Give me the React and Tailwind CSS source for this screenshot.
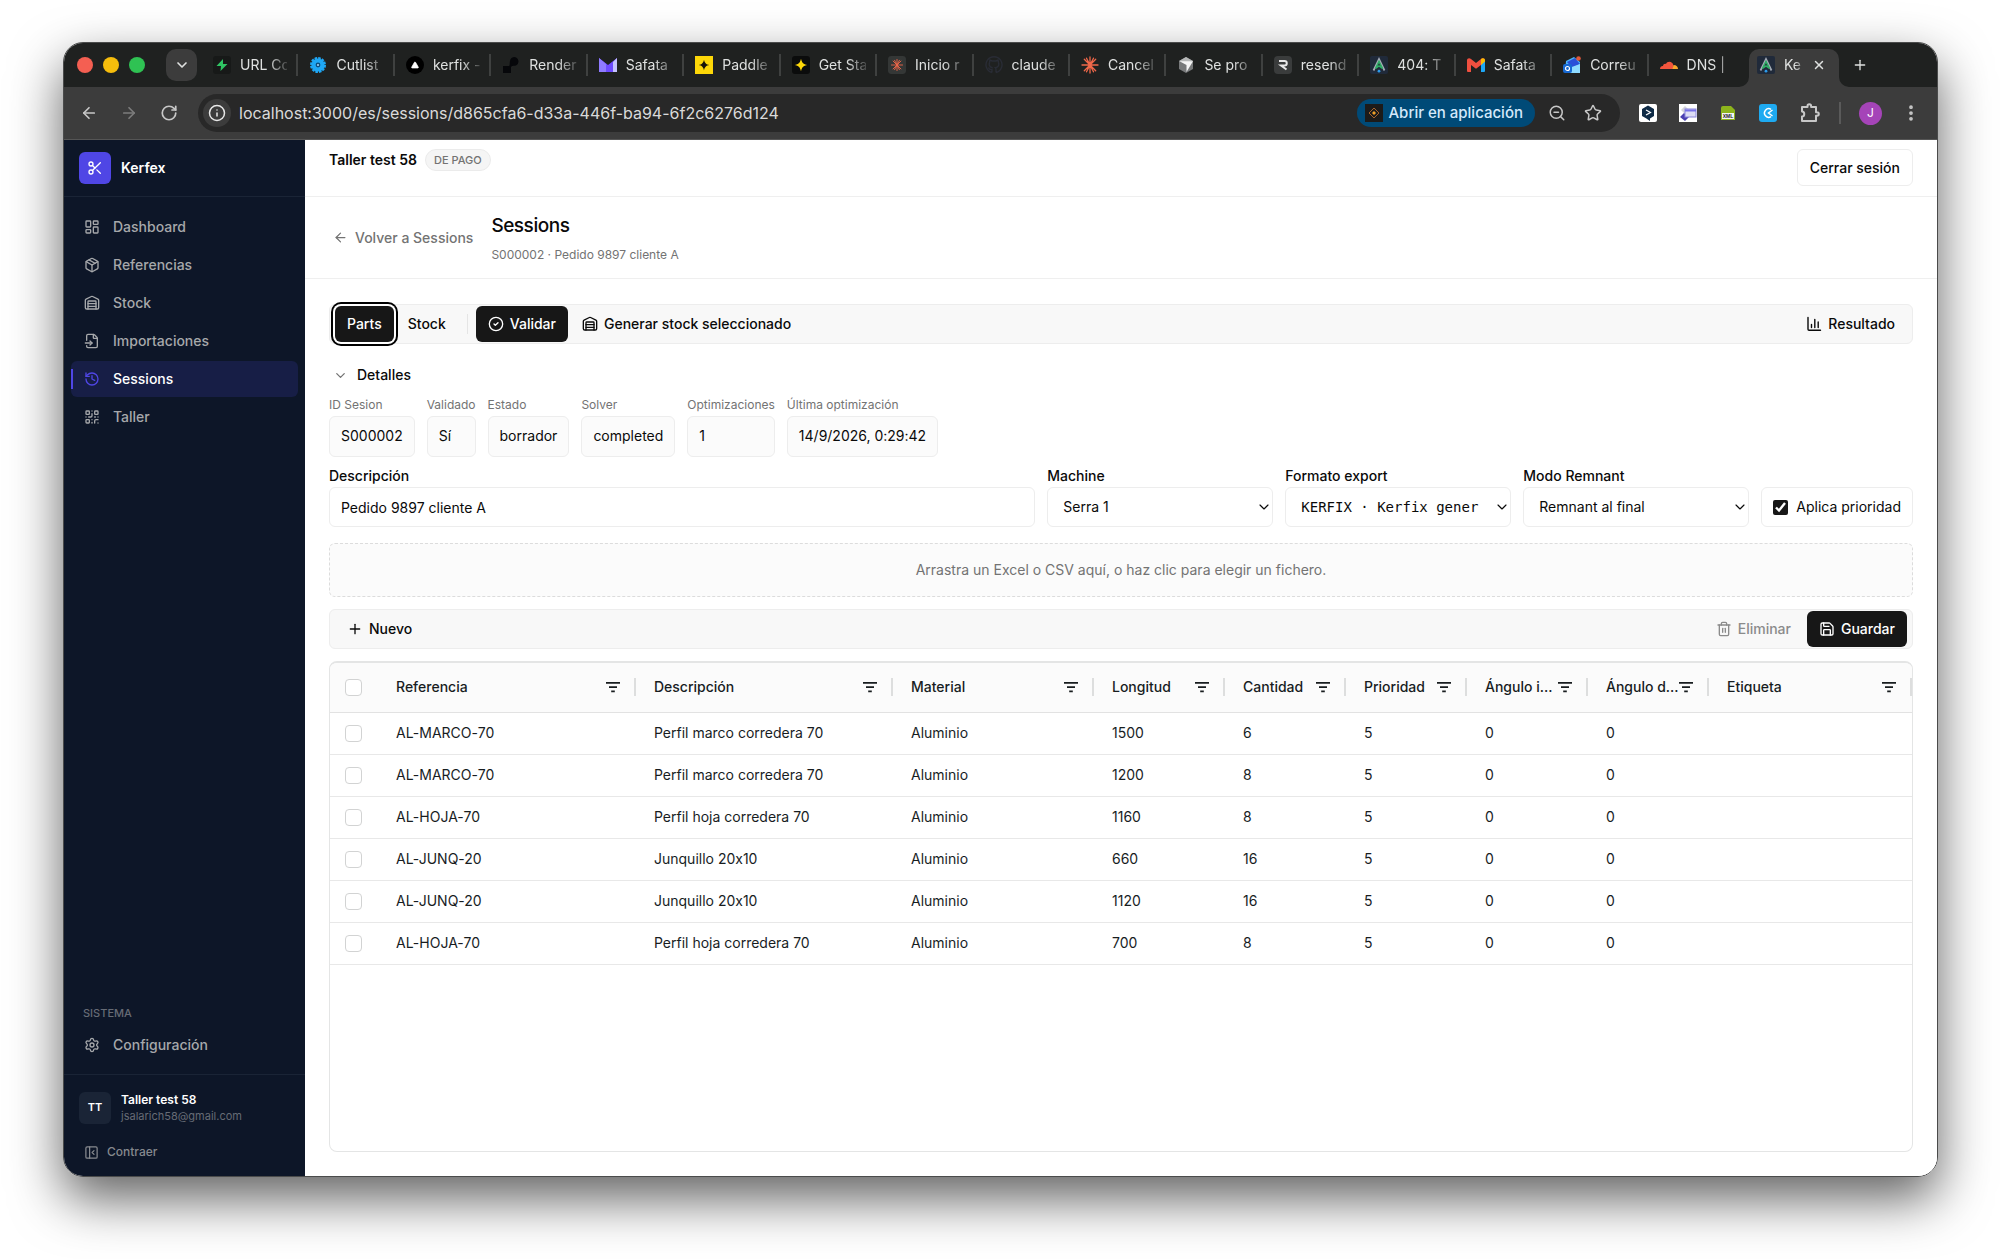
import { useState } from "react";
import {
  ArrowLeft,
  ArrowRight,
  ChevronDown,
  CircleCheck,
  EllipsisVertical,
  FileInput,
  History,
  Info,
  LayoutDashboard,
  Package,
  PanelLeftClose,
  Plus,
  QrCode,
  RotateCw,
  Save,
  Scissors,
  Settings,
  Star,
  Trash2,
  Triangle,
  Warehouse,
  X,
  ZoomOut,
} from "lucide-react";

const BoltIcon = () => (
  <svg viewBox="0 0 18 18" className="size-[18px]">
    <rect width="18" height="18" rx="3" fill="#171918" />
    <path d="M10 3 3.500 10H8l-.5 5L14.500 8H10z" fill="#2fc463" />
  </svg>
);

const GearIcon = () => (
  <svg viewBox="0 0 18 18" className="size-[18px]">
    <circle cx="9" cy="9" r="6.600" fill="#1ea7f5" />
    <circle cx="9" cy="9" r="7" fill="none" stroke="#1ea7f5" strokeWidth="2" strokeDasharray="2.600 1.065" />
    <circle cx="9" cy="9" r="2.400" fill="#0d4e7d" />
    <circle cx="9" cy="9" r="1" fill="#a8dcff" />
  </svg>
);

const VercelIcon = () => (
  <span className="flex size-[18px] items-center justify-center rounded-full bg-black">
    <Triangle className="size-2 fill-white text-white" />
  </span>
);

const RenderIcon = () => (
  <svg viewBox="0 0 18 18" className="size-[18px]">
    <path d="M12 1a4.500 4.500 0 0 1 2 8.500c-3 .5-4.500 0-5 2V17H1v-7h6c1 0 .5-3 1-5a4.500 4.500 0 0 1 4-4z" fill="#06070a" />
  </svg>
);

const MailMIcon = () => (
  <svg viewBox="0 0 18 18" className="size-[18px]">
    <path d="M0 2l9 7 9-7v14H0z" fill="#6d4aff" />
    <path d="M0 2l7 6v8H0z" fill="#8f7bff" />
    <path d="M14 6l4-4v14h-4z" fill="#c5c2ff" />
  </svg>
);

const PaddleIcon = () => (
  <svg viewBox="0 0 18 18" className="size-[18px]">
    <rect width="18" height="18" fill="#fdd708" />
    <path d="M9 3.500c.6 3.500 2 4.900 5.500 5.500-3.500.6-4.900 2-5.500 5.500C8.400 11 7 9.600 3.500 9 7 8.400 8.400 7 9 3.500z" fill="#15130a" />
  </svg>
);

const PaddleDarkIcon = () => (
  <svg viewBox="0 0 18 18" className="size-[18px]">
    <rect width="18" height="18" rx="3" fill="#0b0c0c" />
    <path d="M9 2.500c.7 4 2.300 5.800 6.500 6.500-4.200.7-5.800 2.500-6.500 6.500C8.300 11.500 6.700 9.700 2.500 9 6.700 8.300 8.300 6.500 9 2.500z" fill="#fdd708" />
  </svg>
);

const Burst = () => (
  <path
    d="M9 1v16M1 9h16M3.300 3.300l11.400 11.400M14.700 3.300 3.300 14.700M5.500 2.200l7 13.600M12.500 2.200l-7 13.600"
    stroke="#f0684a"
    strokeWidth="1.300"
    strokeLinecap="round"
  />
);

const BurstIcon = () => (
  <svg viewBox="0 0 18 18" className="size-[18px]">
    <Burst />
  </svg>
);

const BurstTileIcon = () => (
  <svg viewBox="-4 -4 26 26" className="size-[18px]">
    <rect x="-4" y="-4" width="26" height="26" rx="5" fill="#343736" />
    <Burst />
  </svg>
);

const GithubIcon = () => (
  <svg viewBox="0 0 18 18" className="size-[18px]">
    <path
      d="M7 16.500v-3c-2 .4-3-.5-3.500-2M11 16.500v-3c0-1-.3-1.400-.7-1.800 3.200-.4 4-2.700 3.200-5.200L13 4l-2 1H7L5 4l-.5 2.500c-.8 2.500 0 4.800 3.200 5.200M7 16.500A8 8 0 1 1 11 16.500"
      fill="none"
      stroke="#292c35"
      strokeWidth="1.400"
    />
  </svg>
);

const CursorIcon = () => (
  <svg viewBox="0 0 18 18" className="size-[18px]">
    <path d="M9 1l7 4v8l-7 4-7-4V5z" fill="#77797a" />
    <path d="M2 5l7-4 7 4-7 2z" fill="#b5b7b7" />
    <path d="M2.500 5.300H16L9.500 16V9z" fill="#f5f5f5" />
  </svg>
);

const ResendIcon = () => (
  <svg viewBox="0 0 18 18" className="size-[18px]">
    <rect width="18" height="18" rx="4" fill="#3a3c3c" />
    <path d="M5 5h5.500a2 2 0 0 1 0 4.500H7l5.500 4" fill="none" stroke="#e8e8e8" strokeWidth="2" />
  </svg>
);

const ArrowAIcon = () => (
  <svg viewBox="0 0 18 18" className="size-[18px]">
    <rect width="18" height="18" rx="2" fill="#202a3a" />
    <path d="M3.500 14.500 9 3l5.500 11.500" fill="none" stroke="#a3aab5" strokeWidth="1.800" />
    <path d="M5.500 12.500 9 5.500l3.500 7L9 10z" fill="none" stroke="#2fae66" strokeWidth="1.500" />
    <circle cx="9" cy="15.200" r="1.400" fill="#2c9ae8" />
  </svg>
);

const GmailIcon = () => (
  <svg viewBox="0 0 18 18" className="size-[18px]">
    <path d="M14 6l4-2.500V15a1 1 0 0 1-1 1h-3z" fill="#1ea7f5" />
    <path d="M0 4.500C0 2 2.500 1.800 4 3l5 4 5-4c1.500-1.200 4-1 4 1.500L14 9l-5 3.700L4 9v7H1a1 1 0 0 1-1-1z" fill="#ef4f3f" />
    <path d="M14 3v6l4-3.500v-1C18 2 15.500 1.800 14 3z" fill="#fbbc04" />
  </svg>
);

const OutlookIcon = () => (
  <svg viewBox="0 0 18 18" className="size-[18px]">
    <path d="M3 5l8-4 6 5v11H2z" fill="#4bb5f8" />
    <path d="M4 6l8-4 5 6-8 4z" fill="#2a4fd8" />
    <path d="M6 12l11-4v9H6z" fill="#8edbff" />
    <rect y="8" width="9" height="9" rx="2" fill="#1769d2" />
    <circle cx="4.500" cy="12.500" r="2" fill="none" stroke="#fff" strokeWidth="1.200" />
    <circle cx="15.500" cy="2.500" r="2.300" fill="#e0593c" />
  </svg>
);

const CloudflareIcon = () => (
  <svg viewBox="0 0 18 18" className="size-[18px]">
    <path d="M0 13c0-2 1.500-3.200 3-3 .2-2 2-2.500 3-2 1-3 6.500-3.500 7.500 1.500L13 13z" fill="#f2553d" />
    <path d="M12.500 13l1-4c3 0 4.500 1.700 4.500 4z" fill="#fba92c" />
  </svg>
);

const FilterIcon = () => (
  <svg viewBox="0 0 14 12" className="h-3 w-3.5">
    <path d="M0 1h14v1.800H0zM3 5.200h8V7H3zM5.200 9.400h3.600v1.800H5.200z" fill="#181d1f" />
  </svg>
);

const PuzzleIcon = () => (
  <svg viewBox="0 0 22 22" className="size-[22px]">
    <path
      d="M3 5h5.500V4a1.800 1.800 0 0 1 3.600 0v1H17v5.200h1a1.800 1.800 0 0 1 0 3.600h-1V19H3v-4.500c3 0 3-5 0-5z"
      fill="none"
      stroke="#c7c7c7"
      strokeWidth="2"
      strokeLinejoin="round"
    />
  </svg>
);

const tabs = [
  { title: "URL Co", icon: <BoltIcon /> },
  { title: "Cutlist", icon: <GearIcon /> },
  { title: "kerfix -", icon: <VercelIcon /> },
  { title: "Render", icon: <RenderIcon /> },
  { title: "Safata", icon: <MailMIcon /> },
  { title: "Paddle", icon: <PaddleIcon /> },
  { title: "Get Sta", icon: <PaddleDarkIcon /> },
  { title: "Inicio r", icon: <BurstTileIcon /> },
  { title: "claude", icon: <GithubIcon /> },
  { title: "Cancel", icon: <BurstIcon /> },
  { title: "Se pro", icon: <CursorIcon /> },
  { title: "resend", icon: <ResendIcon /> },
  { title: "404: T", icon: <ArrowAIcon /> },
  { title: "Safata", icon: <GmailIcon /> },
  { title: "Correu", icon: <OutlookIcon /> },
  { title: "DNS |", icon: <CloudflareIcon /> },
];

const navItems = [
  { label: "Dashboard", icon: LayoutDashboard },
  { label: "Referencias", icon: Package },
  { label: "Stock", icon: Warehouse },
  { label: "Importaciones", icon: FileInput },
  { label: "Sessions", icon: History },
  { label: "Taller", icon: QrCode },
];

const details = [
  ["ID Sesion", "S000002"],
  ["Validado", "Sí"],
  ["Estado", "borrador"],
  ["Solver", "completed"],
  ["Optimizaciones", "1"],
  ["Última optimización", "14/9/2026, 0:29:42"],
];

const columns = [
  { label: "Referencia", width: "w-[258px]" },
  { label: "Descripción", width: "w-[257px]" },
  { label: "Material", width: "w-[201px]" },
  { label: "Longitud", width: "w-[131px]" },
  { label: "Cantidad", width: "w-[121px]" },
  { label: "Prioridad", width: "w-[121px]" },
  { label: "Ángulo i...", width: "w-[121px]" },
  { label: "Ángulo d...", width: "w-[121px]" },
  { label: "Etiqueta", width: "" },
];

const rows = [
  ["AL-MARCO-70", "Perfil marco corredera 70", "Aluminio", 1500, 6, 5, 0, 0, ""],
  ["AL-MARCO-70", "Perfil marco corredera 70", "Aluminio", 1200, 8, 5, 0, 0, ""],
  ["AL-HOJA-70", "Perfil hoja corredera 70", "Aluminio", 1160, 8, 5, 0, 0, ""],
  ["AL-JUNQ-20", "Junquillo 20x10", "Aluminio", 660, 16, 5, 0, 0, ""],
  ["AL-JUNQ-20", "Junquillo 20x10", "Aluminio", 1120, 16, 5, 0, 0, ""],
  ["AL-HOJA-70", "Perfil hoja corredera 70", "Aluminio", 700, 8, 5, 0, 0, ""],
];

function TabStrip() {
  return (
    <div className="flex h-11 items-end bg-[#1f2120] pl-[13px] text-sm text-[#dfe1e0]">
      <div className="flex h-full items-center gap-[10px]">
        <span className="size-4 rounded-full bg-[#f45f52]" />
        <span className="size-4 rounded-full bg-[#f6bd0c]" />
        <span className="size-4 rounded-full bg-[#2fc253]" />
      </div>
      <button aria-label="Buscar pestañas" className="mb-[6px] ml-[21px] flex h-8 w-[31px] items-center justify-center rounded-[10px] bg-[#3c3c3c]">
        <ChevronDown className="size-4" strokeWidth={2.5} />
      </button>
      <div className="-mr-[6px] ml-[5px] flex h-full min-w-0 flex-1 items-center">
        {tabs.map((tab, i) => (
          <button key={i} className="flex h-full min-w-0 flex-1 items-center pl-[11px]">
            <span className="shrink-0">{tab.icon}</span>
            <span className="ml-[9px] min-w-0 flex-1 whitespace-nowrap text-left [mask-image:linear-gradient(to_right,black_60%,transparent_110%)]">
              {tab.title}
            </span>
            <span className={`ml-[9px] h-[22px] w-[2px] shrink-0 ${i < tabs.length - 1 ? "bg-[#3f4140]" : ""}`} />
          </button>
        ))}
      </div>
      <svg viewBox="0 0 10 10" className="size-[10px] shrink-0">
        <path d="M10 0v10H0A10 10 0 0 0 10 0z" fill="#3c3c3c" />
      </svg>
      <div className="flex h-[38px] w-[90px] shrink-0 items-center rounded-t-[10px] bg-[#3c3c3c] pb-[6px] pl-2">
        <ArrowAIcon />
        <span className="ml-[9px] w-[18px] [mask-image:linear-gradient(to_right,black_60%,transparent_120%)]">Ke</span>
        <button aria-label="Cerrar pestaña" className="ml-[10px]">
          <X className="size-[14px]" strokeWidth={2.5} />
        </button>
      </div>
      <svg viewBox="0 0 10 10" className="size-[10px] shrink-0">
        <path d="M0 0v10h10A10 10 0 0 1 0 0z" fill="#3c3c3c" />
      </svg>
      <button aria-label="Nueva pestaña" className="mr-[69px] mb-[14px] ml-[3px]">
        <Plus className="size-4" strokeWidth={2} />
      </button>
    </div>
  );
}

function AddressBar() {
  return (
    <div className="flex h-[53px] items-center border-b border-[#555] bg-[#3c3c3c] pl-4 text-[#c7c7c7]">
      <button aria-label="Atrás">
        <ArrowLeft className="size-[18px]" strokeWidth={2.25} />
      </button>
      <button aria-label="Adelante" className="ml-[22px] text-[#7c7c7c]">
        <ArrowRight className="size-[18px]" strokeWidth={2.25} />
      </button>
      <button aria-label="Recargar" className="ml-[22px]">
        <RotateCw className="size-[18px]" strokeWidth={2.25} />
      </button>
      <div className="ml-5 flex h-[38px] min-w-0 flex-1 items-center rounded-full bg-[#282828] pr-[18px] pl-[5px]">
        <span className="flex size-7 items-center justify-center rounded-full bg-[#3c3c3c] text-[#e8e8e8]">
          <Info className="size-[18px]" />
        </span>
        <label htmlFor="url" className="sr-only">Dirección</label>
        <input
          id="url"
          className="ml-2 min-w-0 flex-1 bg-transparent text-base text-[#dadada] outline-none"
          defaultValue="localhost:3000/es/sessions/d865cfa6-d33a-446f-ba94-6f2c6276d124"
        />
        <button className="flex h-7 items-center gap-[5px] rounded-full bg-[#004a77] pr-3 pl-2 text-[15px] font-medium text-[#d5e9fb]">
          <svg viewBox="0 0 18 18" className="size-[18px]">
            <rect width="18" height="18" fill="#1c1b1a" />
            <path d="M9 4l5 5-5 5-5-5z" fill="none" stroke="#a4622d" />
            <path d="M9 7l2 2-2 2-2-2z" fill="#f0a029" />
          </svg>
          Abrir en aplicación
        </button>
        <button aria-label="Zoom" className="ml-[13px]">
          <ZoomOut className="size-[18px]" />
        </button>
        <button aria-label="Añadir a marcadores" className="ml-[18px]">
          <Star className="size-[18px]" />
        </button>
      </div>
      <div className="ml-[19px] flex items-center gap-[22px]">
        <svg viewBox="0 0 18 18" className="size-[18px]">
          <rect width="18" height="18" rx="2" fill="#fff" />
          <path d="M9 1.500l6 3.500v7L11 14.500V17l-4-2.700L3 12V5z" fill="#0f2b46" />
          <path d="M7 6l4.500 2.500L7 11" fill="none" stroke="#fff" strokeWidth="1.200" />
        </svg>
        <svg viewBox="0 0 18 18" className="size-[18px]">
          <rect width="18" height="18" fill="#fff" />
          <path d="M2 6l4-4 4 4-4 4z" fill="#d4d4dc" />
          <path d="M1 13l4-4 5 4-4 4z" fill="#4a3fb0" />
          <rect x="6" y="5" width="11" height="8" fill="#dcdcf4" stroke="#8a86dc" />
          <path d="M6 6.500h11" stroke="#7872e8" strokeWidth="2" />
        </svg>
        <svg viewBox="0 0 18 18" className="size-[18px]">
          <path d="M2 4a2 2 0 0 1 2-2h8l4 4v10H2z" fill="#8db41c" />
          <rect x="3" y="9" width="12" height="6" fill="#f4f4f4" />
          <text x="9" y="14" textAnchor="middle" fontSize="5" fontWeight="700" fontFamily="Liberation Sans, sans-serif" fill="#222">XML</text>
        </svg>
        <svg viewBox="0 0 18 18" className="size-[18px]">
          <rect width="18" height="18" rx="3" fill="#1eaaf1" />
          <path d="M12 5.300A4.300 4.300 0 1 0 12 12.700M13.500 6 9.500 9l4 3" fill="none" stroke="#fff" strokeWidth="1.500" />
        </svg>
        <button aria-label="Extensiones">
          <PuzzleIcon />
        </button>
      </div>
      <span className="ml-[18px] h-[22px] w-[2px] bg-[#5a5a5a]" />
      <button className="ml-[18px] flex size-[23px] items-center justify-center rounded-full bg-[#a544b8] text-xs text-white">J</button>
      <button aria-label="Menú" className="mr-4 ml-[19px]">
        <EllipsisVertical className="size-5" strokeWidth={2.5} />
      </button>
    </div>
  );
}

function Sidebar() {
  return (
    <aside className="flex w-[241px] shrink-0 flex-col bg-[#0d1628] text-sm font-medium text-[#a6a8ab]">
      <div className="flex h-[57px] items-center gap-[10px] border-b border-[#1a2436] px-[15px]">
        <span className="flex size-8 items-center justify-center rounded-md bg-[#4f46e5]">
          <Scissors className="size-4 text-white" />
        </span>
        <span className="font-semibold text-white">Kerfex</span>
      </div>
      <nav className="flex flex-1 flex-col gap-[2px] px-[7px] pt-3">
        {navItems.map(({ label, icon: Icon }) =>
          label === "Sessions" ? (
            <a key={label} href="#sessions" className="relative flex h-9 items-center gap-[13px] rounded-md bg-[#171e46] px-[13px] text-white">
              <span className="absolute left-0 h-5 w-[2px] bg-[#4f46e5]" />
              <Icon className="size-4 text-[#4f46e5]" />
              {label}
            </a>
          ) : (
            <a key={label} href="#nav" className="flex h-9 items-center gap-[13px] rounded-md px-[13px]">
              <Icon className="size-4" />
              {label}
            </a>
          )
        )}
      </nav>
      <div className="border-b border-[#1a2436] px-[7px] pb-[11px]">
        <p className="px-3 pb-[5px] text-[11px] text-[#666b75]">SISTEMA</p>
        <a href="#config" className="flex h-9 items-center gap-[13px] px-[13px]">
          <Settings className="size-4" />
          Configuración
        </a>
      </div>
      <div className="flex items-center gap-[10px] px-[15px] pt-4 pb-[14px]">
        <span className="flex size-8 items-center justify-center rounded-md bg-[#1a2436] text-[11px] font-semibold text-white">TT</span>
        <div>
          <p className="text-xs leading-[17px] font-semibold text-white">Taller test 58</p>
          <p className="text-[11px] leading-[17px] font-normal text-[#666b75]">jsalarich58@gmail.com</p>
        </div>
      </div>
      <button className="mb-[11px] flex h-[26px] items-center gap-2 px-5 text-xs text-[#86898e]">
        <PanelLeftClose className="size-[15px]" />
        Contraer
      </button>
    </aside>
  );
}

function SelectField({ id, label, value, mono }) {
  return (
    <div className="w-[226px]">
      <label htmlFor={id} className="block h-[22px] leading-[22px] font-medium">{label}</label>
      <div className="relative">
        <select
          id={id}
          className={`h-10 w-full appearance-none rounded-md border border-[#ededed] bg-white pr-7 pl-[15px] ${
            mono ? "font-['DejaVu_Sans_Mono',monospace]" : ""
          }`}
        >
          <option>{value}</option>
        </select>
        <ChevronDown className="pointer-events-none absolute top-3 right-[1px] size-4" strokeWidth={1.75} />
      </div>
    </div>
  );
}

function PartsTable() {
  const [selected, setSelected] = useState([]);

  const toggle = (i) => {
    setSelected((prev) => (prev.includes(i) ? prev.filter((n) => n !== i) : [...prev, i]));
  };

  const checkboxClass = "block size-[17px] appearance-none rounded-[4px] border border-[#d2d3d3] bg-white checked:bg-black";

  return (
    <div className="mt-3 flex-1 overflow-hidden rounded-lg border border-t-2 border-[#e4e5e5]">
      <table className="w-full table-fixed text-left text-[#181d1f]">
        <thead>
          <tr className="h-[49px] border-b border-[#e2e2e2] bg-[#fbfbfb]">
            <th className="w-12 pl-[15px]">
              <input
                type="checkbox"
                aria-label="Seleccionar todo"
                className={checkboxClass}
                checked={selected.length === rows.length}
                onChange={(e) => setSelected(e.target.checked ? rows.map((_, i) => i) : [])}
              />
            </th>
            {columns.map((col) => (
              <th key={col.label} className={`pl-[18px] font-medium ${col.width}`}>
                <div className="flex items-center justify-between">
                  <span className="whitespace-nowrap">{col.label}</span>
                  <span className="flex shrink-0 items-center gap-[14px]">
                    <FilterIcon />
                    <span className="h-[18px] w-[2px] bg-[#dddede]" />
                  </span>
                </div>
              </th>
            ))}
          </tr>
        </thead>
        <tbody>
          {rows.map((row, i) => (
            <tr key={i} className="h-[42px] border-b border-[#e8e8e8]">
              <td className="pl-[15px]">
                <input
                  type="checkbox"
                  aria-label={`Seleccionar fila ${i + 1}`}
                  className={checkboxClass}
                  checked={selected.includes(i)}
                  onChange={() => toggle(i)}
                />
              </td>
              {row.map((cell, j) => (
                <td key={j} className="truncate pl-[18px]">{cell}</td>
              ))}
            </tr>
          ))}
        </tbody>
      </table>
    </div>
  );
}

function SessionPage() {
  const [description, setDescription] = useState("Pedido 9897 cliente A");

  return (
    <main className="flex min-w-0 flex-1 flex-col bg-white text-sm text-[#0a0a0a]">
      <header className="flex h-[57px] items-start justify-between border-b border-[#efefef] px-6 pt-[9px]">
        <div className="flex h-[22px] items-center gap-2">
          <span className="font-semibold">Taller test 58</span>
          <span className="rounded-full border border-[#ebebeb] bg-[#f5f5f5] px-2 text-[11px] leading-5 font-medium text-[#737373]">DE PAGO</span>
        </div>
        <button className="h-[37px] rounded-md border border-[#ededed] px-3 font-medium">Cerrar sesión</button>
      </header>

      <div className="flex h-[82px] items-center gap-[18px] border-b border-[#efefef] px-6">
        <a href="#sessions" className="flex items-center gap-[7px] pl-1 font-medium text-[#737373]">
          <ArrowLeft className="size-[15px]" />
          Volver a Sessions
        </a>
        <div>
          <h1 className="text-[19px] leading-[30px] font-medium tracking-tight">Sessions</h1>
          <p className="mt-1 text-xs leading-5 text-[#737373]">S000002 · Pedido 9897 cliente A</p>
        </div>
      </div>

      <div className="flex flex-1 flex-col px-6 pt-[25px] pb-6">
        <div className="flex h-10 items-center rounded-md border border-[#ededed] bg-[#f8f8f8] px-[5px] font-medium">
          <button className="h-9 rounded-md bg-[#171717] px-3 text-white ring-2 ring-black ring-offset-2">Parts</button>
          <button className="ml-[2px] h-9 px-3">Stock</button>
          <span className="ml-[9px] h-5 w-px bg-[#e5e5e5]" />
          <button className="ml-2 flex h-9 items-center gap-[6px] rounded-md bg-[#171717] px-3 text-white">
            <CircleCheck className="size-4" />
            Validar
          </button>
          <button className="ml-[2px] flex h-9 items-center gap-[6px] px-3">
            <Warehouse className="size-4" />
            Generar stock seleccionado
          </button>
          <button className="ml-auto flex h-9 items-center gap-[6px] px-3">
            <svg viewBox="0 0 16 16" className="size-4" fill="none" stroke="currentColor" strokeWidth="1.400" strokeLinecap="round">
              <path d="M2 1.500v11.800q0 1 1 1h11.500M5.500 8.500v3M8.800 3.500v8M12.200 6v5.500" />
            </svg>
            Resultado
          </button>
        </div>

        <button className="mt-[21px] flex h-5 items-center gap-[9px] self-start pl-1 font-medium">
          <ChevronDown className="size-[15px] text-[#737373]" />
          Detalles
        </button>

        <dl className="mt-[10px] flex gap-3">
          {details.map(([label, value]) => (
            <div key={label}>
              <dt className="mb-[2px] text-xs leading-[19px] text-[#737373]">{label}</dt>
              <dd className="h-[41px] rounded-md border border-[#ededed] bg-[#fbfbfb] px-[11px] leading-[38px]">{value}</dd>
            </div>
          ))}
        </dl>

        <div className="mt-2 flex items-end gap-3">
          <div className="min-w-0 flex-1">
            <label htmlFor="description" className="block h-[22px] leading-[22px] font-medium">Descripción</label>
            <input
              id="description"
              value={description}
              onChange={(e) => setDescription(e.target.value)}
              className="h-10 w-full rounded-md border border-[#ededed] px-[11px]"
            />
          </div>
          <SelectField id="machine" label="Machine" value="Serra 1" />
          <SelectField id="format" label="Formato export" value="KERFIX · Kerfix gener" mono />
          <SelectField id="remnant" label="Modo Remnant" value="Remnant al final" />
          <label className="flex h-10 items-center gap-2 rounded-md border border-[#ededed] px-[11px]">
            <input type="checkbox" defaultChecked className="size-[15px] accent-[#171717]" />
            Aplica prioridad
          </label>
        </div>

        <button className="mt-4 h-[54px] rounded-md border border-dashed border-[#dcdcdc] bg-[#fbfbfb] text-[#737373]">
          Arrastra un Excel o CSV aquí, o haz clic para elegir un fichero.
        </button>

        <div className="mt-3 flex h-10 items-center rounded-md border border-[#ededed] bg-[#f8f8f8] px-[5px] font-medium">
          <button className="flex h-9 items-center gap-[6px] px-3">
            <Plus className="size-4" />
            Nuevo
          </button>
          <button className="ml-auto flex h-9 items-center gap-[6px] px-3 text-[#8b8b8b]">
            <Trash2 className="size-4" />
            Eliminar
          </button>
          <button className="ml-1 flex h-9 items-center gap-[6px] rounded-md bg-[#171717] px-3 text-white">
            <Save className="size-4" />
            Guardar
          </button>
        </div>

        <PartsTable />
      </div>
    </main>
  );
}

export default function App() {
  return (
    <div className="flex min-h-screen bg-white pt-[42px] pr-[62px] pb-[82px] pl-[63px] font-['Inter',sans-serif] [font-feature-settings:'calt'_0]">
      <div className="flex min-w-0 flex-1 flex-col overflow-hidden rounded-[20px] border border-[#4a4b4b] shadow-[0_22px_52px_rgba(0,0,0,0.62)]">
        <TabStrip />
        <AddressBar />
        <div className="flex flex-1">
          <Sidebar />
          <SessionPage />
        </div>
      </div>
    </div>
  );
}
